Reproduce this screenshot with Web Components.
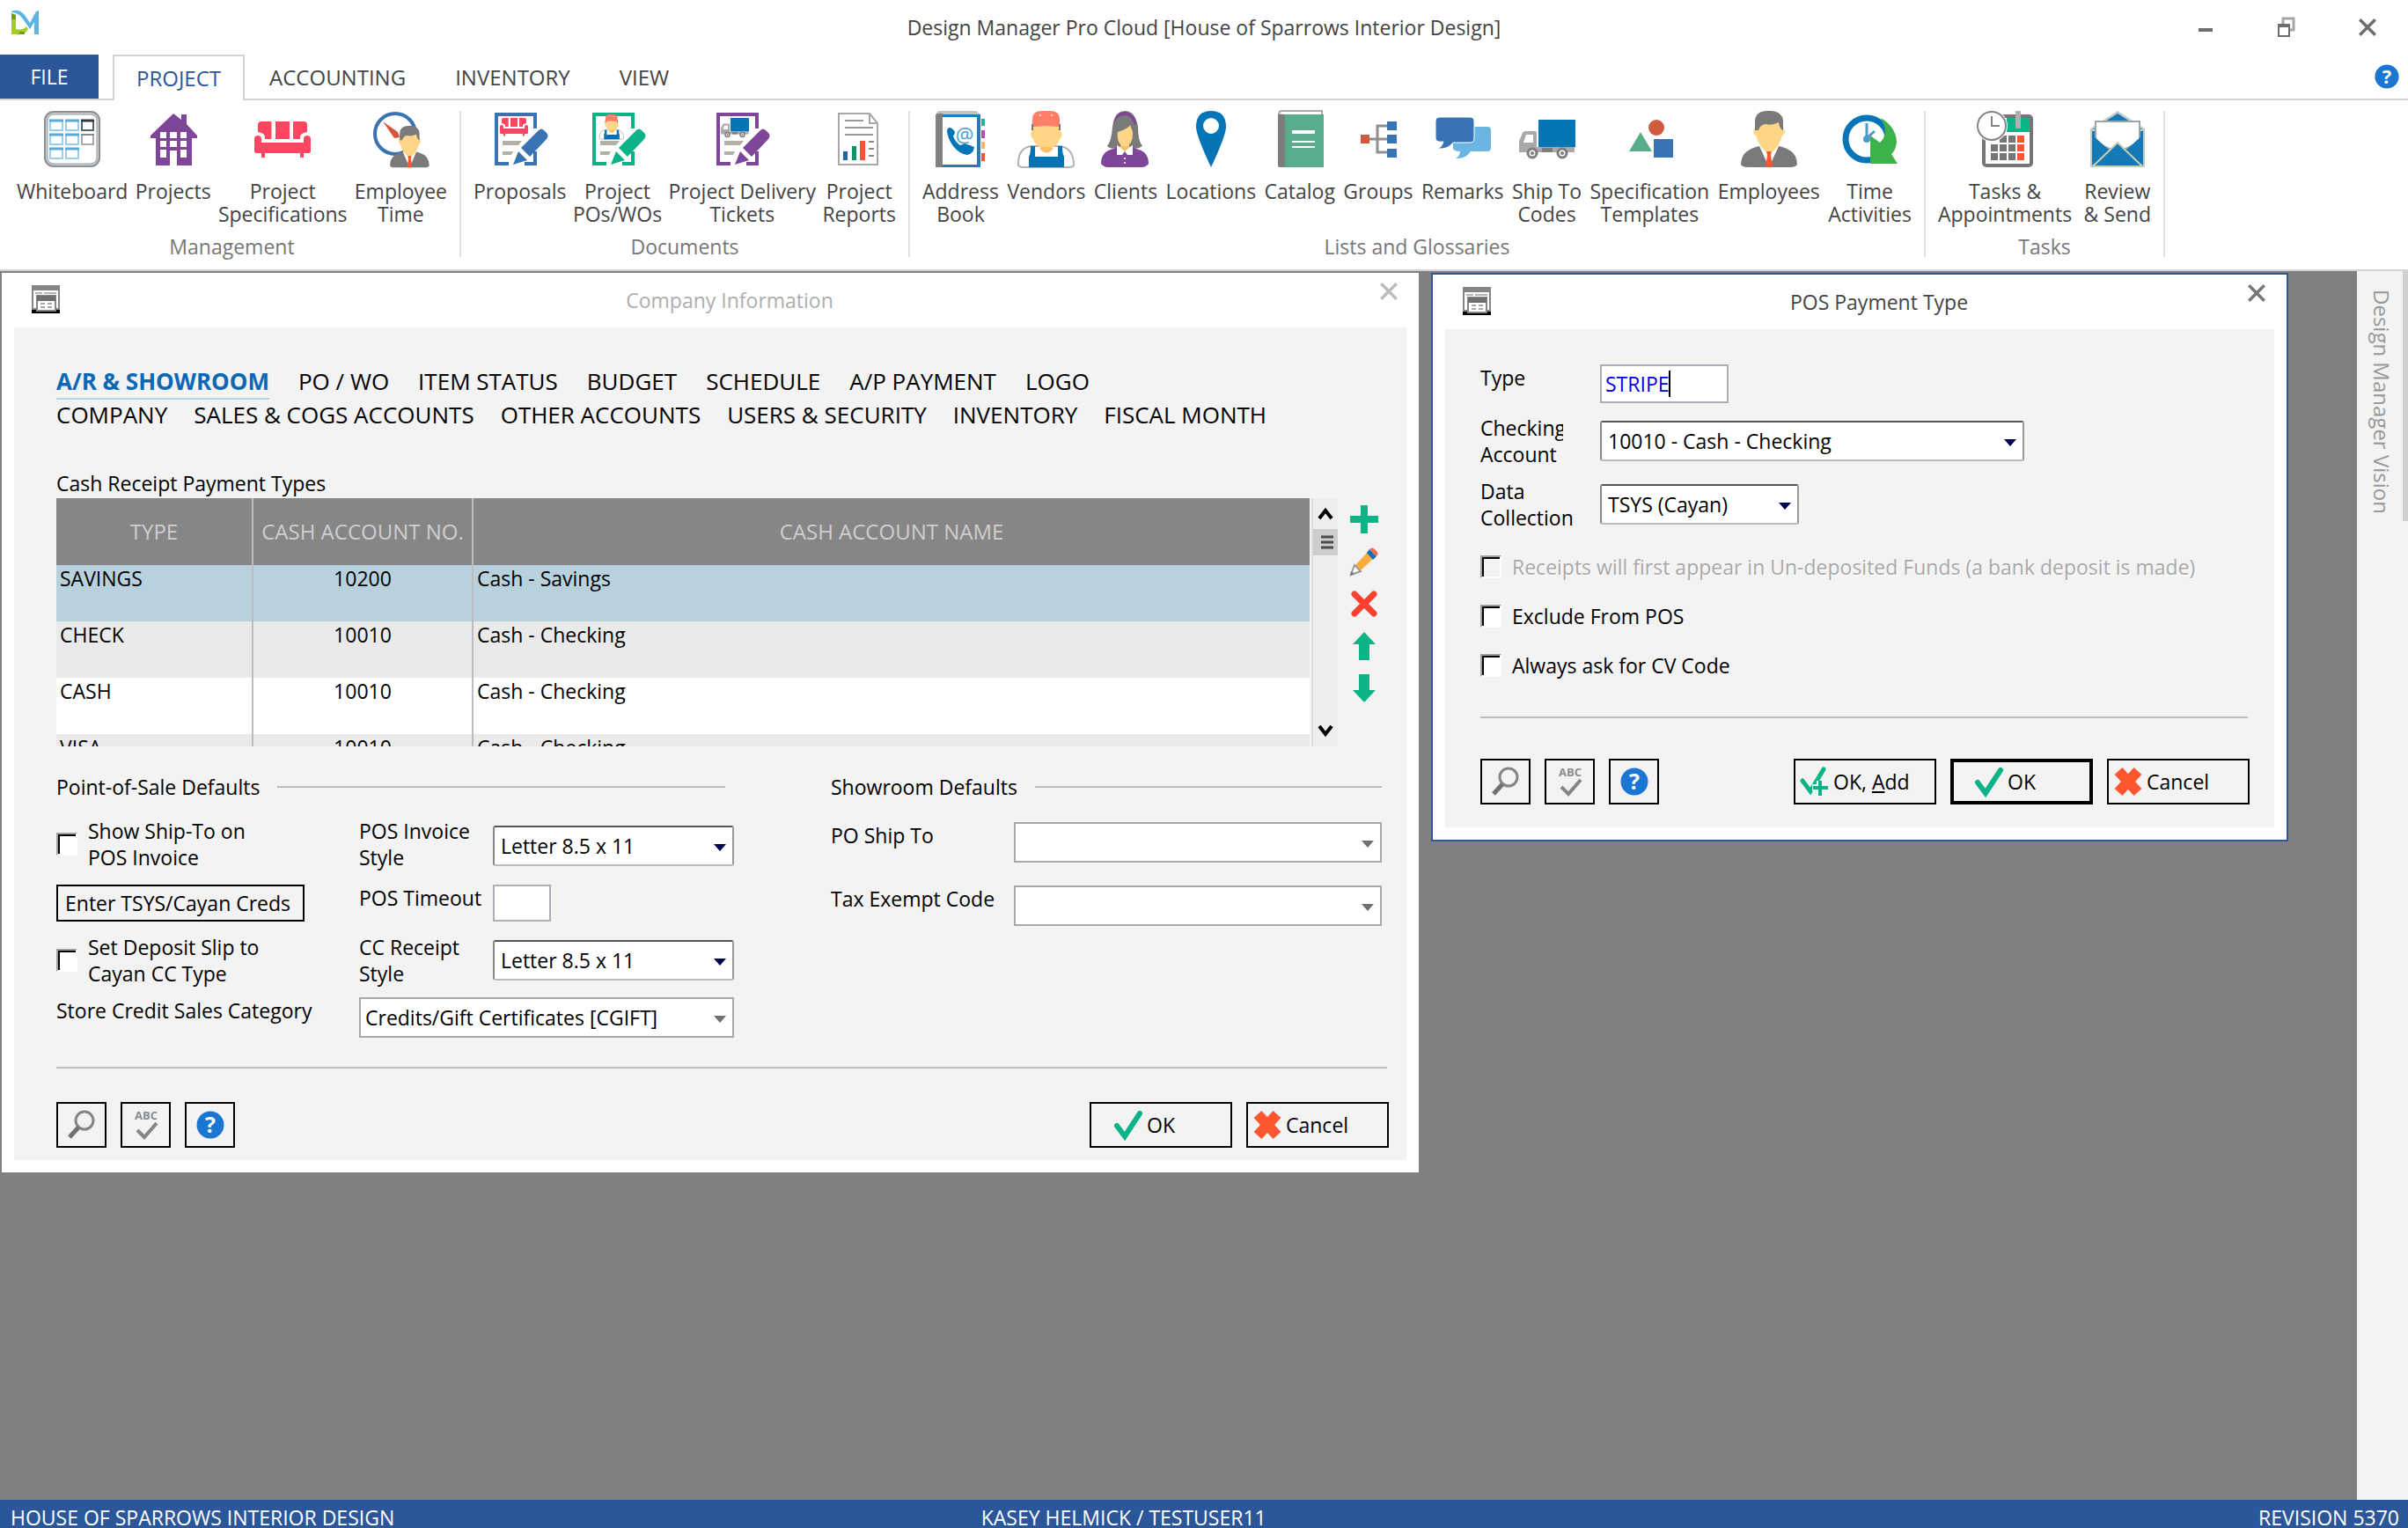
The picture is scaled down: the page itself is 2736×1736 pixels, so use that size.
<!DOCTYPE html>
<html lang="en">
<head>
<meta charset="utf-8">
<title>Design Manager Pro Cloud</title>
<style>
  html, body { margin: 0; height: 100%; }
  body { font: 23px/30px "Open Sans", "Noto Sans", sans-serif; color: #000; background: #fff; overflow: hidden; }
</style>
</head>
<body>
<dm-app></dm-app>

<script>
/* ---------- icon drawings, all on a 64 x 64 or 32 x 32 grid ---------- */
const sofa = c => `<g fill="${c}"><path d="M4 16q0-4 4-4h11.500v20H12v-3q-1-4-8-5zM24 12h16v20H24zM44 12h12q4 0 4 4v8q-7 1-8 5v3h-8z"/><path d="M0 32q0-4 4-4t4 4v4h48v-4q0-4 4-4t4 4v14q0 2-2 2H2q-2 0-2-2zM8 48h4v5H8zM52 48h4v5h-4z"/></g>`;
const truck = `<path d="M22 10h42v31H22z" fill="#0675b8"/><path d="M0 47V34l4-9q1-2 3-2h11q2 0 2 2v16h43v6z" fill="#a9a9a9"/><path d="M5 36l3-9h8v9z" fill="#fff"/><path d="M26 42h12v5H26z" fill="#7d7d7d"/><g fill="#fff" stroke="#7d7d7d" stroke-width="3"><circle cx="15" cy="48" r="5"/><circle cx="49" cy="48" r="5"/></g><circle cx="15" cy="48" r="2" fill="#7d7d7d"/><circle cx="49" cy="48" r="2" fill="#7d7d7d"/>`;
const worker = `<path d="M0 62q-1-20 15-22h32q16 2 16 22-2 2-5 2H5q-3 0-5-2z" fill="#fff" stroke="#b4b4b4" stroke-width="2"/><path d="M25 36h14v8q-7 7-14 0z" fill="#fbc069"/><path d="M12 64V52q2-3 2-12h5v12h26V40h5q0 9 2 12v12z" fill="#0672b6"/><path d="M15 18h33v6q3 1 1 6l-2 2q-2 7-8 9H25q-6-2-8-9l-2-2q-2-5 0-6z" fill="#ffd588"/><path d="M16 18V9q0-9 11-9h9q11 0 11 9v9q-15-1-31 0z" fill="#ff7f66"/><path d="M15 15h2v7h-2zM46 15h2v7h-2z" fill="#777"/><circle cx="25" cy="5" r="1" fill="#fff"/><circle cx="38" cy="5" r="1" fill="#fff"/>`;
const man = `<path d="M0 61q0-15 17-20l8-2 7 14 7-14 8 2q17 5 17 20-2 3-8 3H8q-6 0-8-3z" fill="#7a7a7a"/><path d="M21 40l11 24 11-24-7-3h-8z" fill="#fff"/><path d="M26 34h12v9l-6 5-6-5z" fill="#fbc069"/><path d="M29 46h6l-1 4 2 14h-8l2-14z" fill="#ff5630"/><path d="M16 12h32v8q3 1 1 7l-2 1q-3 11-10 18h-9q-8-7-11-18l-2-1q-2-6 1-7z" fill="#ffd588"/><path d="M16 22V11Q17 0 30 0h5q12 1 13 11v11q-4-1-5-9-9 4-14 2-7 0-9 7z" fill="#7a7a7a"/>`;
const sheet = (c, art) => `<path d="M49 20V4H5v56h14M37 60h12V46" fill="none" stroke="${c}" stroke-width="4"/><path d="M12 34h22l-4 5H12zM12 46h12l-2 4H12z" fill="#b3b0a6"/>${art}<path d="M33 42L53 22q3-3 6 0l3 3q3 3 0 7L43 52z" fill="${c}"/><path d="M30 46l10 10-16 5z" fill="${c}"/>`;
const help = `<circle cx="16" cy="16" r="15.500" fill="#1976d2"/><text x="16" y="25" text-anchor="middle" font-family="Open Sans, sans-serif" font-weight="700" font-size="25" fill="#fff">?</text>`;

const ICONS = {
  logo: [32, `<path d="M1 3q8-4 15 4l6 9 7-13 3-1v27h-5V15l-5 8q-8-12-12-16-4-3-9-3z" fill="#5bb3e6"/><path d="M1 5l5 2v16q8 2 12-3l2 3q-5 8-15 6H1z" fill="#a3cc26"/><path d="M1 5l5 2v5H1zM10 26h6v3h-6z" fill="#6f9c2d"/>`],
  minimize: [32, `<path d="M8 17h16v4H8z" fill="#6d6d6d"/>`],
  restore: [32, `<path d="M12 12V6h12v13h-5" fill="none" stroke="#a5a5a5" stroke-width="3"/><path d="M7 14h12v12H7z" fill="#fff" stroke="#6d6d6d" stroke-width="2"/><path d="M6 12h14v4H6z" fill="#6d6d6d"/>`],
  close: [32, `<path d="M6 6l20 20M26 6L6 26" stroke="currentColor" stroke-width="4"/>`],
  help: [32, help],
  whiteboard: [64, `<rect x="2" y="2" width="60" height="60" rx="9" fill="#fff" stroke="#c9cdd0" stroke-width="4"/><rect x="1" y="1" width="62" height="62" rx="10" fill="none" stroke="#8b9194" stroke-width="2"/><rect x="4" y="4" width="56" height="56" rx="7" fill="none" stroke="#999" stroke-width="1"/><g fill="#fff" stroke="#9ccde8" stroke-width="2"><path d="M7 11h14v11H7zM25 11h14v11H25zM7 27h14v11H7zM25 27h14v11H25zM7 43h14v11H7zM25 43h14v11H25z"/><path d="M43 27h13v11H43z" stroke="#aaa"/><path d="M43 11h13v11H43z" stroke="#56636e"/></g><path d="M6 11h16M24 11h16M6 27h16M24 27h16M6 43h16M24 43h16" stroke="#5ba9d6" stroke-width="3"/><path d="M42 11h15" stroke="#303a44" stroke-width="3"/><path d="M42 27h15" stroke="#888" stroke-width="2"/>`],
  house: [64, `<path d="M32 3l9 7V4h6v11l12 13v3h-6v31H12V31H6v-3z" fill="#7f4598"/><path d="M17 24h7v7h-7zM28 24h8v7h-8zM40 24h7v7h-7zM17 34h7v7h-7zM28 34h8v7h-8zM40 34h7v7h-7zM17 44h7v9h-7zM40 44h7v9h-7zM28 45h8v17h-8z" fill="#fff"/>`],
  sofa: [64, sofa('#ff4560')],
  emptime: [64, `<circle cx="26" cy="26" r="23" fill="#fff" stroke="#3a74b0" stroke-width="4"/><path d="M12 12l17 12 2 6-6 1z" fill="#d4583a"/><g transform="translate(20 17) scale(.7 .74)">${man}</g>`],
  proposals: [64, sheet('#3874b3', `<g transform="translate(9 2) scale(.5)">${sofa('#ff4560')}</g>`)],
  pos: [64, sheet('#0bb386', `<g transform="translate(11 4) scale(.44)">${worker}</g>`)],
  delivery: [64, sheet('#7f4598', `<g transform="translate(8 3) scale(.5)">${truck}</g>`)],
  reports: [64, `<path d="M9 3h35l9 11v47H9z" fill="#fff" stroke="#a8a8a8" stroke-width="2"/><path d="M44 3v11h9" fill="none" stroke="#a8a8a8" stroke-width="2"/><path d="M16 11h21M16 19h32M16 27h32" stroke="#9a9a9a" stroke-width="2"/><path d="M43 35h6M43 43h6M43 51h6" stroke="#8a8a8a" stroke-width="2"/><path d="M14 46h5v10h-5z" fill="#2461a8"/><path d="M24 40h5v16h-5z" fill="#0b9565"/><path d="M33 34h6v22h-6z" fill="#f4533a"/>`],
  address: [64, `<path d="M5 4q0-4 4-4h41l5 4z" fill="#c2c2c2"/><path d="M4 5q0-2 3-2h5v61H4z" fill="#808080"/><path d="M12 5h42v58H12z" fill="#fff"/><path d="M12 4h43v60H12v-3h39V7H12z" fill="#1f7dbc"/><path d="M56 9h4v8h-4z" fill="#23b58a"/><path d="M56 22h4v9h-4z" fill="#b250a8"/><path d="M56 35h4v8h-4z" fill="#fbb26a"/><path d="M56 48h4v9h-4z" fill="#f4533a"/><path d="M17 23q0-4 4-4 5 3 5 6l-2 4q3 7 8 10l5-2q6 2 11 4-1 8-8 9-9-1-16-10-6-8-7-17z" fill="#0675b8"/><text x="37" y="36" text-anchor="middle" font-family="Open Sans, sans-serif" font-size="23" fill="#4aa1cc">@</text>`],
  vendors: [64, worker],
  clients: [64, `<path d="M11 40q5-6 6-22Q19 0 31 0q12 0 15 18 0 16 5 22-6 4-10 2H20q-5 2-9-2z" fill="#7a7a7a"/><path d="M18 14Q21 1 31 1q10 0 13 13l-2 2Q39 5 31 5T20 12z" fill="#7f4598"/><path d="M4 60q0-14 14-17l6-3h14l6 3q14 3 14 17-3 4-8 4H12q-5 0-8-4z" fill="#7f4598"/><path d="M22 39l9 5 9-5v11h-6l-3-4-3 4h-6z" fill="#fff"/><path d="M26 34h10v8l-5 4-5-4z" fill="#fbc069"/><path d="M23 24q12-4 14-8l3 8q1 14-9 17-10-3-8-17z" fill="#ffd588"/><circle cx="31" cy="54" r="1" fill="#fff"/><circle cx="31" cy="59" r="1" fill="#fff"/>`],
  pin: [64, `<path fill-rule="evenodd" d="M32 0q17 0 17 18 0 10-17 46Q15 28 15 18 15 0 32 0zm0 8a9 9 0 1 0 0 18 9 9 0 0 0 0-18z" fill="#0675b8"/>`],
  catalog: [64, `<path d="M8 4q0-4 4-4h45v5H14z" fill="#fff" stroke="#a8a8a8" stroke-width="2"/><path d="M7 4h8v60H9q-2 0-2-2z" fill="#7d7d7d"/><path d="M15 4h44v60H15z" fill="#57ad8a"/><path d="M23 22h26v4H23zM23 34h26v2H23zM23 40h26v2H23z" fill="#fff"/>`],
  groups: [64, `<path d="M22 32h20M42 17H31v30h11" fill="none" stroke="#8f8f8f" stroke-width="3"/><path d="M12 27h10v10H12z" fill="#cf5a3c"/><path d="M42 12h11v10H42zM42 27h11v10H42zM42 43h11v10H42z" fill="#3874b3"/>`],
  remarks: [64, `<path d="M25 18h35q4 0 4 4v20q0 4-4 4H41q-6 9-17 8 5-3 5-8-8 0-8-4V22z" fill="#6ab6e0"/><path d="M6 7h34q5 0 5 5v19q0 5-5 5H21q-6 8-17 7 5-3 6-8-9 1-9-4V12q0-5 5-5z" fill="#3874b3" stroke="#fff" stroke-width="1"/>`],
  truck: [64, truck],
  templates: [64, `<circle cx="40" cy="19" r="9" fill="#cf5a3c"/><path d="M22 24l13 22H9z" fill="#57ad8a"/><path d="M37 32h22v21H37z" fill="#3874b3"/>`],
  man: [64, man],
  activities: [64, `<circle cx="28" cy="32" r="24" fill="#fff" stroke="#0675b8" stroke-width="7"/><path d="M44 8Q61 18 62 35q-1 10-6 14l7 11H32V28l11 8q11-10 1-28z" fill="#3db14a"/><path d="M28 14v17l9-8" fill="none" stroke="#4b9bca" stroke-width="3"/><circle cx="28" cy="32" r="4" fill="#4b9bca"/>`],
  tasks: [64, `<rect x="8" y="6" width="54" height="56" rx="3" fill="#fff" stroke="#757575" stroke-width="4"/><path d="M34 8h26v16H34z" fill="#0bb386"/><path d="M26 28h8v8h-8zM36 28h8v8h-8zM16 38h8v8h-8zM26 38h8v8h-8zM36 38h8v8h-8zM16 48h8v8h-8zM26 48h8v8h-8zM36 48h8v8h-8z" fill="#757575"/><path d="M46 28h8v8h-8zM46 38h8v8h-8zM46 48h8v8h-8z" fill="#ff5630"/><path d="M44 0h6v20h-6z" fill="#b0b0b0"/><circle cx="17" cy="17" r="18" fill="#fff"/><circle cx="17" cy="17" r="16" fill="#fff" stroke="#858585" stroke-width="2"/><path d="M17 6v11h9" fill="none" stroke="#858585" stroke-width="2"/>`],
  mail: [64, `<path d="M32 0l31 20v44H1V20z" fill="#bfcdc6"/><path d="M32 3l28 18H4zM3 23h58v37H3z" fill="#1479b5"/><path d="M7 12h50v24L41 43H23L7 36z" fill="#fff" stroke="#9ba4a8" stroke-width="2"/><path d="M3 27l20 18L3 62zM61 27L41 45l20 17z" fill="#1479b5"/><path d="M4 63l28-27 28 27z" fill="#1479b5" stroke="#c6cdb6" stroke-width="2"/>`],
  form: [32, `<path d="M0 0h32v30H0z" fill="#858585"/><path d="M2 6h28v20H2z" fill="#fff"/><path d="M4 8h8v2H4zM14 8h14v2H14z" fill="#b5b5b5"/><path d="M0 28h32v4H0z" fill="#000"/><path d="M6 12h21v17H6z" fill="#fff" stroke="#858585" stroke-width="2"/><path d="M6 12h21v6H6z" fill="#707070"/><path d="M10 20h5v2h-5zM18 20h5v2h-5zM10 24h5v2h-5zM18 24h5v2h-5z" fill="#aaa"/>`],
  plus: [32, `<path d="M12 0h8v12h12v8H20v12h-8V20H0v-8h12z" fill="#0bb386"/>`],
  pencil: [32, `<path d="M6 20L20 5l7 7-15 14z" fill="#fbab3f"/><path d="M19 6l3-4 8 8-4 4z" fill="#0d72b5"/><path d="M22 2q3-3 6 0l2 2q3 3 0 6z" fill="#f4694f"/><path d="M5 20l7 7-11 4z" fill="#fff" stroke="#999" stroke-width="2"/><path d="M1 27l4 3-5 2z" fill="#777"/>`],
  cross: [32, `<path d="M5 5l22 22M27 5L5 27" stroke="#fb4030" stroke-width="7" stroke-linecap="round"/>`],
  up: [32, `<path d="M16 0l13 14h-7v18H10V14H3z" fill="#0bb386"/>`],
  down: [32, `<path d="M16 32l13-14h-7V0H10v18H3z" fill="#0bb386"/>`],
  scrollup: [32, `<path d="M9 20l7-9 7 9" fill="none" stroke="#000" stroke-width="4"/>`],
  scrolldown: [32, `<path d="M9 12l7 9 7-9" fill="none" stroke="#000" stroke-width="4"/>`],
  grip: [32, `<path d="M9 9h14M9 15h14M9 21h14" stroke="#4a4a4a" stroke-width="3"/>`],
  arrow: [32, `<path d="M9 14h14l-7 8z" fill="currentColor"/>`],
  search: [32, `<circle cx="19" cy="11" r="10" fill="none" stroke="#858585" stroke-width="3"/><path d="M12 19L2 30" stroke="#707070" stroke-width="5"/>`],
  spell: [32, `<text x="16" y="10" text-anchor="middle" font-family="Open Sans, sans-serif" font-weight="700" font-size="13" fill="#8c8c8c">ABC</text><path d="M6 22l8 8L28 14" fill="none" stroke="#858585" stroke-width="4"/>`],
  ok: [32, `<path d="M3 17l9 12L29 3" fill="none" stroke="#0bb386" stroke-width="6" stroke-linecap="round"/>`],
  okadd: [32, `<path d="M2 15l9 12L26 2" fill="none" stroke="#0bb386" stroke-width="5" stroke-linecap="round"/><path d="M22 15v17M13 23h18" stroke="#f3f3f3" stroke-width="8"/><path d="M22 15v17M14 23h17" stroke="#0bb386" stroke-width="4"/>`],
  cancel: [32, `<path d="M5 4l22 24M27 4L5 28" stroke="#ff5630" stroke-width="12"/>`]
};

/* ---------- base class: every element renders its template once ---------- */
class DmElement extends HTMLElement {
  connectedCallback() {
    if (this.shadowRoot) return;
    const t = document.createElement('template');
    t.innerHTML = `<style>*{box-sizing:border-box}button{font:inherit;color:inherit;background:none;border:0;padding:0;margin:0}${this.css()}</style>${this.html()}`;
    this.attachShadow({ mode: 'open' }).append(t.content.cloneNode(true));
  }
}
const define = (name, css, html = '<slot></slot>') => customElements.define(name, class extends DmElement {
  css() { return typeof css === 'function' ? css(this) : css; }
  html() { return typeof html === 'function' ? html(this) : html; }
});

define('dm-icon', `:host{display:block;width:32px;height:32px;flex:none}:host([size="64"]){width:64px;height:64px}:host([size="28"]){width:28px;height:28px}svg{display:block;width:100%;height:100%;overflow:visible}`,
  el => { const [n, art] = ICONS[el.getAttribute('name')]; return `<svg viewBox="0 0 ${n} ${n}" aria-hidden="true">${art}</svg>`; });

/* ---------- application frame ---------- */
define('dm-titlebar', `
  :host{display:grid;grid-template-columns:1fr auto 1fr;align-items:center;height:62px;color:#444}
  .logo{align-self:start;padding:10px 12px}
  .tools{display:flex;justify-content:flex-end}
  .tools button{width:92px;height:62px;display:grid;place-items:center;color:#6d6d6d}`,
  `<div class="logo"><dm-icon name="logo"></dm-icon></div><span><slot></slot></span>
   <div class="tools"><button aria-label="Minimize"><dm-icon name="minimize"></dm-icon></button><button aria-label="Restore"><dm-icon name="restore"></dm-icon></button><button aria-label="Close"><dm-icon name="close" size="28"></dm-icon></button></div>`);

define('dm-menubar', `
  :host{display:flex;height:52px;border-bottom:2px solid #d4d4d4;color:#444;padding-right:10px;font-size:24px}
  button{padding:0 28px;height:52px}
  .file{background:#2b579a;color:#fff;font-size:23px;width:112px;height:50px;padding:0;margin-right:16px}
  .on{border:2px solid #d4d4d4;border-bottom:0;background:#fff;color:#2b579a;padding:0 25px}
  .help{margin-left:auto;padding:0;height:50px;display:grid;place-items:center}`,
  `<button class="file">FILE</button><button class="on">PROJECT</button><button>ACCOUNTING</button><button>INVENTORY</button><button>VIEW</button>
   <button class="help" aria-label="Help"><dm-icon name="help" size="28"></dm-icon></button>`);

define('dm-ribbon', `:host{display:flex;padding:12px 5px 14px;border-bottom:2px solid #d4d4d4}`);

define('dm-ribbon-group', el => `
  :host{display:flex;flex-direction:column;flex:0 1 ${el.getAttribute('basis')}px;box-sizing:border-box;height:166px;border-right:2px solid #e0e0e0;padding:0 14px}
  .items{display:flex;justify-content:space-between;flex:1}
  .name{color:#777;text-align:center;line-height:24px}`,
  el => `<div class="items"><slot></slot></div><div class="name">${el.getAttribute('name')}</div>`);

define('dm-ribbon-item', `
  :host{display:block}
  button{display:flex;flex-direction:column;align-items:center;gap:14px;color:#444;line-height:26px;white-space:nowrap}
  span{display:block}`,
  el => `<button><dm-icon size="64" name="${el.getAttribute('icon')}"></dm-icon><span><slot></slot></span></button>`);

define('dm-statusbar', `
  :host{display:grid;grid-template-columns:1104fr 1453fr auto;box-sizing:border-box;height:32px;padding:8px 10px 0 12px;line-height:24px;background:#2b579a;color:#fff;white-space:nowrap}`);

define('dm-vision', `
  :host{display:flex;justify-content:space-between;width:58px;background:#f3f3f3;color:#999;font-size:24px}
  span{writing-mode:vertical-rl;padding:21px 9px 21px 13px;line-height:30px}
  i{width:6px;height:284px;background:#d0d0d0}`,
  `<span><slot></slot></span><i></i>`);

define('dm-window', `
  :host{display:block;box-sizing:border-box;background:#fff;padding:0 14px 14px;color:#aeaeae}
  :host([active]){border:2px solid #2b579a;color:#444}
  header{display:grid;grid-template-columns:78px 1fr 34px;height:62px;align-items:center;text-align:center}
  dm-icon[name="form"]{margin-left:20px;margin-top:-2px}
  header button{place-self:start;margin-top:7px;color:#bdbdbd}
  :host([active]) header button{color:#777}
  section{background:#f3f3f3;color:#000}`,
  el => `<header><dm-icon name="form"></dm-icon><span>${el.getAttribute('heading')}</span><button aria-label="Close"><dm-icon name="close" size="28"></dm-icon></button></header><section><slot></slot></section>`);

/* ---------- shared form look ---------- */
const FORM = `
  .combo{display:grid;align-items:center;height:46px;color:#707070}
  .combo>*{grid-area:1/1}
  .combo select{appearance:none;font:inherit;color:#000;width:100%;height:46px;margin:0;padding:0 40px 0 5px;background:#fff;border:2px solid #a8a8a8;border-radius:0}
  .combo dm-icon{justify-self:end;pointer-events:none}
  .combo.list{color:#000050}
  .combo.list select{border-radius:3px;border-color:#555 #999 #bbb #888;padding-left:7px}
  input[type=text]{appearance:none;font:inherit;margin:0;border:2px solid #abb0b6;border-radius:0;background:#fff;padding:0 4px}
  input[type=checkbox]{appearance:none;flex:none;width:24px;height:26px;margin:0 12px 0 0;background:#fff;border:2px solid;border-color:#a0a0a0 #fff #fff #a0a0a0;box-shadow:inset 2px 2px #000}
  input[type=checkbox]:disabled{background:#f3f3f3}
  hr{border:0;height:2px;background:#bdbdbd;margin:0}
  .check{display:flex;align-items:center}`;

define('dm-button', `
  :host{display:block}
  button{display:flex;align-items:center;gap:5px;width:162px;height:52px;border:2px solid #000;padding-left:6px}
  :host([indent]) button{padding-left:26px}
  :host([primary]) button{border-width:4px;padding-left:24px}
  :host([square]) button{width:57px;justify-content:center;padding:0}`,
  el => `<button aria-label="${el.getAttribute('label')}"><dm-icon name="${el.getAttribute('icon')}"></dm-icon>${el.hasAttribute('square') ? '' : '<span><slot></slot></span>'}</button>`);

define('dm-actions', `
  :host{display:flex;gap:16px}
  .end{display:flex;gap:16px;margin-left:auto}`,
  `<dm-button square icon="search" label="Search"></dm-button><dm-button square icon="spell" label="Spelling"></dm-button><dm-button square icon="help" label="Help"></dm-button><div class="end"><slot></slot></div>`);

define('dm-section-title', `
  :host{display:flex;align-items:center;gap:20px}
  i{flex:1;height:2px;background:#bdbdbd}`, `<slot></slot><i></i>`);

define('dm-tabs', `
  :host{display:block;font-size:26px}
  nav{display:flex;gap:0 33px}
  nav + nav{gap:0 30px}
  a{color:inherit;text-decoration:none;line-height:34px;padding-bottom:2px;border-bottom:2px solid transparent;white-space:nowrap}
  a.on{color:#0c67b5;font-weight:700;border-color:#b9d1dd}`,
  `<nav><a class="on" href="#ar">A/R &amp; SHOWROOM</a><a href="#po">PO / WO</a><a href="#item">ITEM STATUS</a><a href="#budget">BUDGET</a><a href="#schedule">SCHEDULE</a><a href="#ap">A/P PAYMENT</a><a href="#logo">LOGO</a></nav>
   <nav><a href="#company">COMPANY</a><a href="#sales">SALES &amp; COGS ACCOUNTS</a><a href="#other">OTHER ACCOUNTS</a><a href="#users">USERS &amp; SECURITY</a><a href="#inventory">INVENTORY</a><a href="#fiscal">FISCAL MONTH</a></nav>`);

define('dm-payment-table', `
  :host{display:flex;height:282px}
  .view{flex:1;overflow:hidden}
  table{width:100%;border-collapse:separate;border-spacing:0;table-layout:fixed}
  col.a{width:224px}col.b{width:250px}
  th{height:76px;background:#868686;color:#cfcfcf;font-weight:400;font-size:24px;padding:0}
  td{height:64px;padding:0 4px;vertical-align:top}
  th:not(:last-child),td:not(:last-child){border-right:2px solid #bdbdbd}
  td:nth-child(2){text-align:center}
  tr:nth-child(odd) td{background:#fff}
  tr:nth-child(even) td{background:#eaeaea}
  tr.on td{background:#b9d1dd}
  .bar{display:flex;flex-direction:column;align-items:center;width:30px;margin:0 14px 0 2px;background:#eee;border-left:2px solid #ddd}
  .bar dm-icon[name=scrollup]{margin-top:3px}
  .bar dm-icon[name=scrolldown]{margin-top:auto;margin-bottom:3px}
  .thumb{width:100%;background:#cdcdcd;height:30px;display:grid;place-items:center;overflow:hidden}
  .tools{display:flex;flex-direction:column;gap:16px;padding-top:8px;width:44px}`,
  `<div class="view"><table><colgroup><col class="a"><col class="b"><col></colgroup>
    <thead><tr><th>TYPE</th><th>CASH ACCOUNT NO.</th><th>CASH ACCOUNT NAME</th></tr></thead>
    <tbody><tr class="on"><td>SAVINGS</td><td>10200</td><td>Cash - Savings</td></tr><tr><td>CHECK</td><td>10010</td><td>Cash - Checking</td></tr><tr><td>CASH</td><td>10010</td><td>Cash - Checking</td></tr><tr><td>VISA</td><td>10010</td><td>Cash - Checking</td></tr></tbody></table></div>
   <div class="bar"><dm-icon name="scrollup"></dm-icon><div class="thumb"><dm-icon name="grip"></dm-icon></div><dm-icon name="scrolldown"></dm-icon></div>
   <div class="tools"><button aria-label="Add"><dm-icon name="plus"></dm-icon></button><button aria-label="Edit"><dm-icon name="pencil"></dm-icon></button><button aria-label="Delete"><dm-icon name="cross"></dm-icon></button><button aria-label="Move up"><dm-icon name="up"></dm-icon></button><button aria-label="Move down"><dm-icon name="down"></dm-icon></button></div>`);

/* ---------- Company Information ---------- */
define('dm-company-form', FORM + `
  :host{display:block;padding:44px 20px 14px 48px}
  h2{font:inherit;margin:42px 0 2px}
  .cols{display:flex;gap:110px;margin-top:31px;padding-right:8px}
  .pos{flex:0 1 770px}.show{flex:1}
  .pos dm-section-title{margin-right:10px}
  .pos .grid{display:grid;grid-template-columns:344px 152px 1fr;grid-template-rows:64px 44px 60px 46px;row-gap:12px;margin-top:20px}
  .show .grid{display:grid;grid-template-columns:208px 1fr;row-gap:26px;margin-top:25px}
  .combo.list{align-self:center}
  .wide{grid-column:2/4}
  .check{align-self:start;line-height:30px}
  .creds{width:282px;height:42px;border:2px solid #000;text-align:left;padding-left:8px}
  #timeout{width:66px;height:42px}
  hr{margin:33px 2px 38px 0}`,
  `<dm-tabs></dm-tabs>
   <h2>Cash Receipt Payment Types</h2>
   <dm-payment-table></dm-payment-table>
   <div class="cols">
    <div class="pos"><dm-section-title>Point-of-Sale Defaults</dm-section-title>
     <div class="grid">
      <div class="check"><input type="checkbox" id="shipto"><label for="shipto">Show Ship-To on<br>POS Invoice</label></div>
      <label for="invstyle">POS Invoice<br>Style</label><div class="combo list"><select id="invstyle"><option>Letter 8.5 x 11</option></select><dm-icon name="arrow"></dm-icon></div>
      <button class="creds">Enter TSYS/Cayan Creds</button>
      <label for="timeout">POS Timeout</label><input type="text" id="timeout">
      <div class="check"><input type="checkbox" id="slip"><label for="slip">Set Deposit Slip to<br>Cayan CC Type</label></div>
      <label for="ccstyle">CC Receipt<br>Style</label><div class="combo list"><select id="ccstyle"><option>Letter 8.5 x 11</option></select><dm-icon name="arrow"></dm-icon></div>
      <label for="credit">Store Credit Sales Category</label><div class="combo wide"><select id="credit"><option>Credits/Gift Certificates [CGIFT]</option></select><dm-icon name="arrow"></dm-icon></div>
     </div></div>
    <div class="show"><dm-section-title>Showroom Defaults</dm-section-title>
     <div class="grid">
      <label for="poship">PO Ship To</label><div class="combo"><select id="poship"><option></option></select><dm-icon name="arrow"></dm-icon></div>
      <label for="tax">Tax Exempt Code</label><div class="combo"><select id="tax"><option></option></select><dm-icon name="arrow"></dm-icon></div>
     </div></div>
   </div>
   <hr>
   <dm-actions><dm-button indent icon="ok" label="OK">OK</dm-button><dm-button icon="cancel" label="Cancel">Cancel</dm-button></dm-actions>`);

/* ---------- POS Payment Type ---------- */
define('dm-payment-form', FORM + `
  :host{display:block;padding:40px 28px 26px 40px}
  .grid{display:grid;grid-template-columns:136px 1fr;grid-template-rows:45px 60px 60px;row-gap:12px}
  .combo{align-self:center}
  .clip{width:94px;overflow:hidden}
  .account{width:482px}.data{width:226px}
  .entry{position:relative;justify-self:start}
  #type{width:146px;height:44px;color:#0000e0}
  .caret{position:absolute;left:78px;top:7px;width:2px;height:30px;background:#000}
  .checks{display:grid;gap:26px;margin-top:26px}
  .off{color:#a8a8a8;text-shadow:1px 1px #fff}
  hr{margin:43px 2px 46px 0}`,
  `<div class="grid">
    <label for="type">Type</label><div class="entry"><input type="text" id="type" value="STRIPE"><span class="caret"></span></div>
    <label for="account" class="clip">Checking<br>Account</label><div class="combo list account"><select id="account"><option>10010 - Cash - Checking</option></select><dm-icon name="arrow"></dm-icon></div>
    <label for="data">Data<br>Collection</label><div class="combo list data"><select id="data"><option>TSYS (Cayan)</option></select><dm-icon name="arrow"></dm-icon></div>
   </div>
   <div class="checks">
    <div class="check"><input type="checkbox" id="undep" disabled><label for="undep" class="off">Receipts will first appear in Un-deposited Funds (a bank deposit is made)</label></div>
    <div class="check"><input type="checkbox" id="excl"><label for="excl">Exclude From POS</label></div>
    <div class="check"><input type="checkbox" id="cv"><label for="cv">Always ask for CV Code</label></div>
   </div>
   <hr>
   <dm-actions><dm-button icon="okadd" label="OK, Add">OK, <u>A</u>dd</dm-button><dm-button primary icon="ok" label="OK">OK</dm-button><dm-button icon="cancel" label="Cancel">Cancel</dm-button></dm-actions>`);

/* ---------- the whole application ---------- */
const item = (icon, text) => `<dm-ribbon-item icon="${icon}">${text}</dm-ribbon-item>`;
define('dm-app', `
  :host{display:flex;flex-direction:column;height:100vh}
  main{flex:1;display:flex;background:#808080;min-height:0}
  .desk{flex:1;display:flex;align-items:flex-start;gap:14px;padding:2px}
  .company{flex:0 1 1610px}.payment{flex:0 1 974px}`,
  `<dm-titlebar>Design Manager Pro Cloud [House of Sparrows Interior Design]</dm-titlebar>
   <dm-menubar></dm-menubar>
   <dm-ribbon>
    <dm-ribbon-group basis="519" name="Management">${item('whiteboard','Whiteboard')}${item('house','Projects')}${item('sofa','Project<br>Specifications')}${item('emptime','Employee<br>Time')}</dm-ribbon-group>
    <dm-ribbon-group basis="510" name="Documents">${item('proposals','Proposals')}${item('pos','Project<br>POs/WOs')}${item('delivery','Project Delivery<br>Tickets')}${item('reports','Project<br>Reports')}</dm-ribbon-group>
    <dm-ribbon-group basis="1154" name="Lists and Glossaries">${item('address','Address<br>Book')}${item('vendors','Vendors')}${item('clients','Clients')}${item('pin','Locations')}${item('catalog','Catalog')}${item('groups','Groups')}${item('remarks','Remarks')}${item('truck','Ship To<br>Codes')}${item('templates','Specification<br>Templates')}${item('man','Employees')}${item('activities','Time<br>Activities')}</dm-ribbon-group>
    <dm-ribbon-group basis="272" name="Tasks">${item('tasks','Tasks &amp;<br>Appointments')}${item('mail','Review<br>&amp; Send')}</dm-ribbon-group>
   </dm-ribbon>
   <main>
    <div class="desk">
     <dm-window class="company" heading="Company Information"><dm-company-form></dm-company-form></dm-window>
     <dm-window class="payment" active heading="POS Payment Type"><dm-payment-form></dm-payment-form></dm-window>
    </div>
    <dm-vision>Design Manager Vision</dm-vision>
   </main>
   <dm-statusbar><span>HOUSE OF SPARROWS INTERIOR DESIGN</span><span>KASEY HELMICK / TESTUSER11</span><span>REVISION 5370</span></dm-statusbar>`);
</script>
</body>
</html>
